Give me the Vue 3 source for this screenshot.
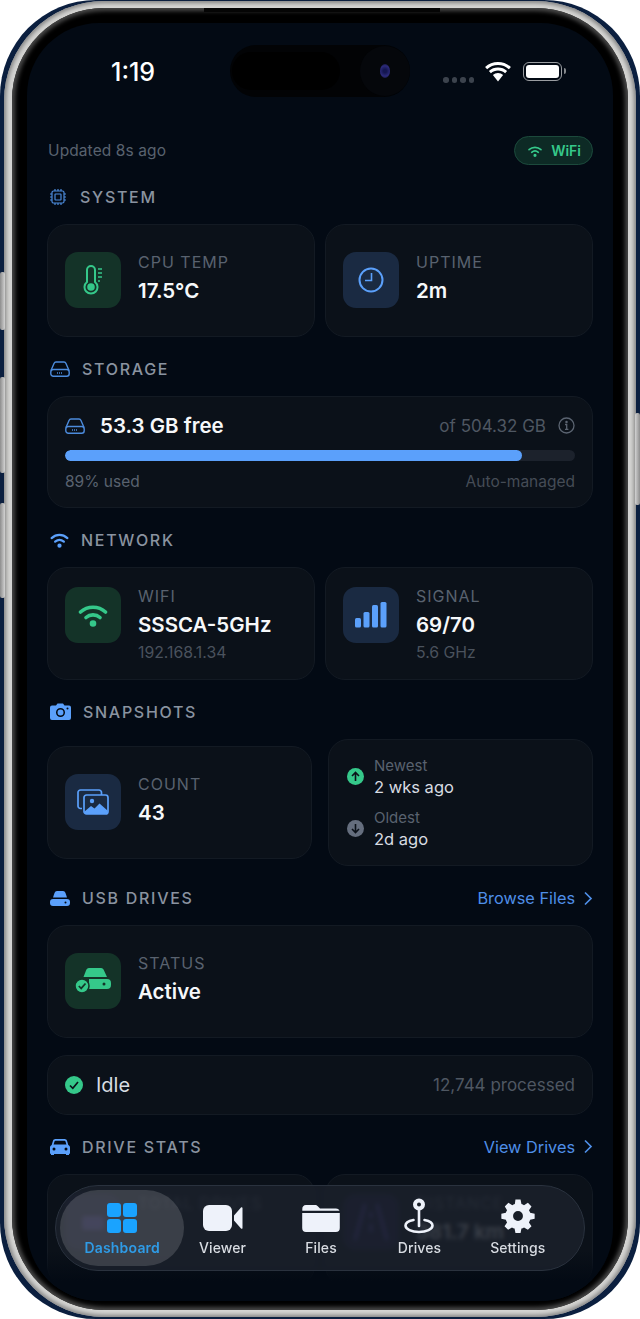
<template>
    <div class="phone">
        <span class="side-btn left b1"></span>
        <span class="side-btn left b2"></span>
        <span class="side-btn left b3"></span>
        <span class="side-btn right b4"></span>
        <div class="ring">
            <div class="bezel">
                <span class="lip"></span>
                <div class="screen">
                    <div class="status-bar">
                        <span class="time">1:19</span>
                        <div class="status-right">
                            <span class="dots"><i></i><i></i><i></i><i></i></span>
                            <svg class="st-wifi" viewBox="0 0 28 20" fill="#fff">
                                <path d="M14 3c4.200 0 8 1.600 10.900 4.200l2-2.300C23.400 1.800 18.900 0 14 0S4.600 1.800 1.100 4.900l2 2.300C6 4.600 9.800 3 14 3z" />
                                <path d="M14 8.500c2.700 0 5.200 1 7.100 2.700l2-2.300C20.600 6.700 17.400 5.500 14 5.500S7.400 6.700 4.900 8.900l2 2.300c1.900-1.700 4.400-2.700 7.100-2.700z" />
                                <path d="M14 11c-1.900 0-3.700.7-5.100 2L14 19.500l5.100-6.500c-1.400-1.300-3.200-2-5.100-2z" />
                            </svg>
                            <span class="battery"><i></i></span>
                        </div>
                    </div>

                    <div class="island">
                        <span class="island-pill"></span>
                        <span class="island-cam"><i></i></span>
                    </div>

                    <div class="top-row">
                        <span class="updated">Updated 8s ago</span>
                        <span class="conn-pill">
                            <svg viewBox="0 0 24 24" width="16" height="16" fill="none" stroke="#35c88a" stroke-width="2.400" stroke-linecap="round">
                                <path d="M3 10c5-4.600 13-4.600 18 0" />
                                <path d="M7 14c2.900-2.600 7.100-2.600 10 0" />
                                <circle cx="12" cy="18.500" r="1.200" fill="#35c88a" />
                            </svg>
                            WiFi
                        </span>
                    </div>

                    <section>
                        <header class="sec-head">
                            <svg class="sec-icon chip" width="16" height="16" viewBox="0 0 16 16" fill="none" stroke="#4c8bdc" stroke-width="1.200">
                                <rect x="2" y="2" width="12" height="12" rx="1.500" />
                                <rect x="5" y="5" width="6" height="6" rx=".5" />
                                <path d="M5 0v2M8 0v2M11 0v2M5 14v2M8 14v2M11 14v2M0 5h2M0 8h2M0 11h2M14 5h2M14 8h2M14 11h2" />
                            </svg>
                            <h2>SYSTEM</h2>
                        </header>
                        <div class="two-col">
                            <div class="card stat">
                                <div class="icon-box green">
                                    <svg width="22" height="30" viewBox="0 0 22 30" fill="none" stroke="#35c88a" stroke-width="2">
                                        <path d="M5 17V5a4 4 0 0 1 8 0v12a6.500 6.500 0 1 1-8 0z" />
                                        <circle cx="9" cy="22" r="2.800" fill="#35c88a" />
                                        <path d="M16 4h4M16 8h4M16 12h4M16 16h2" stroke-width="1.500" />
                                    </svg>
                                </div>
                                <div class="stat-text">
                                    <span class="label">CPU TEMP</span>
                                    <span class="value">17.5°C</span>
                                </div>
                            </div>
                            <div class="card stat">
                                <div class="icon-box blue">
                                    <svg width="28" height="28" viewBox="0 0 28 28" fill="none" stroke="#5ba0fb" stroke-width="2">
                                        <circle cx="14" cy="14" r="11.500" />
                                        <path d="M14.500 7v7.500H8" stroke-width="1.600" />
                                    </svg>
                                </div>
                                <div class="stat-text">
                                    <span class="label">UPTIME</span>
                                    <span class="value">2m</span>
                                </div>
                            </div>
                        </div>
                    </section>

                    <section>
                        <header class="sec-head">
                            <svg class="sec-icon" width="20" height="16" viewBox="0 0 20 16" fill="none" stroke="#4c8bdc" stroke-width="1.400">
                                <path d="M1 9.500 4 2.500C4.400 1.600 5 1 6 1h8c1 0 1.600.6 2 1.500l3 7" />
                                <rect x=".8" y="8.500" width="18.400" height="6.700" rx="2.500" />
                                <path d="M7 12h6" stroke-dasharray="1 1" />
                            </svg>
                            <h2>STORAGE</h2>
                        </header>
                        <div class="card storage">
                            <div class="storage-top">
                                <svg width="20" height="16" viewBox="0 0 20 16" fill="none" stroke="#4c8bdc" stroke-width="1.400">
                                    <path d="M1 9.500 4 2.500C4.400 1.600 5 1 6 1h8c1 0 1.600.6 2 1.500l3 7" />
                                    <rect x=".8" y="8.500" width="18.400" height="6.700" rx="2.500" />
                                    <path d="M7 12h6" stroke-dasharray="1 1" />
                                </svg>
                                <span class="free">53.3 GB free</span>
                                <span class="total">of 504.32 GB</span>
                                <svg width="17" height="17" viewBox="0 0 17 17" fill="none" stroke="#5b6471" stroke-width="1.300">
                                    <circle cx="8.500" cy="8.500" r="7.500" />
                                    <path d="M7 7.500h1.700V12M7 12.300h3.400" />
                                    <circle cx="8.500" cy="5" r=".6" fill="#5b6471" />
                                </svg>
                            </div>
                            <div class="track"><div class="fill" :style="{ width: usedPercent + '%' }"></div></div>
                            <div class="storage-foot">
                                <span>89% used</span>
                                <span class="dim">Auto-managed</span>
                            </div>
                        </div>
                    </section>

                    <section>
                        <header class="sec-head">
                            <svg class="sec-icon" width="19" height="15" viewBox="0 0 24 19" fill="none" stroke="#5ba0fb" stroke-width="2.800" stroke-linecap="round">
                                <path d="M2 6.500c6-5.400 14-5.400 20 0" />
                                <path d="M6.500 11c3.300-2.800 7.700-2.800 11 0" />
                                <circle cx="12" cy="16" r="1.300" fill="#5ba0fb" />
                            </svg>
                            <h2>NETWORK</h2>
                        </header>
                        <div class="two-col">
                            <div class="card stat top">
                                <div class="icon-box green">
                                    <svg width="30" height="23" viewBox="0 0 30 23" fill="none" stroke="#35c88a" stroke-width="3.600" stroke-linecap="round">
                                        <path d="M2.500 8c7-6.400 18-6.400 25 0" />
                                        <path d="M8 13.500c4-3.500 10-3.500 14 0" />
                                        <circle cx="15" cy="19.500" r="1.500" fill="#35c88a" />
                                    </svg>
                                </div>
                                <div class="stat-text">
                                    <span class="label">WIFI</span>
                                    <span class="value">SSSCA-5GHz</span>
                                    <span class="sub">192.168.1.34</span>
                                </div>
                            </div>
                            <div class="card stat top">
                                <div class="icon-box blue">
                                    <svg width="32" height="26" viewBox="0 0 32 26" fill="#5ba0fb">
                                        <rect x="0" y="16" width="6" height="9.500" rx="1.500" />
                                        <rect x="8.500" y="10" width="6" height="15.500" rx="1.500" />
                                        <rect x="17" y="3" width="6" height="22.500" rx="1.500" />
                                        <rect x="25.500" y="0" width="6" height="25.500" rx="1.500" />
                                    </svg>
                                </div>
                                <div class="stat-text">
                                    <span class="label">SIGNAL</span>
                                    <span class="value">69/70</span>
                                    <span class="sub">5.6 GHz</span>
                                </div>
                            </div>
                        </div>
                    </section>

                    <section>
                        <header class="sec-head">
                            <svg class="sec-icon" width="21" height="17" viewBox="0 0 21 17" fill="#5ba0fb">
                                <path fill-rule="evenodd" d="M2 2.500h4L7.500.5h5.500L14.500 2.500H19a2 2 0 0 1 2 2V15a2 2 0 0 1-2 2H2a2 2 0 0 1-2-2V4.500a2 2 0 0 1 2-2zM10.500 5a4.500 4.500 0 1 0 0 9 4.500 4.500 0 0 0 0-9zm0 1.500a3 3 0 1 1 0 6 3 3 0 0 1 0-6zM17.500 4.500a1 1 0 1 0 0 2 1 1 0 0 0 0-2z" />
                            </svg>
                            <h2>SNAPSHOTS</h2>
                        </header>
                        <div class="snap-row">
                            <div class="card stat">
                                <div class="icon-box blue">
                                    <svg width="32" height="26" viewBox="0 0 32 26" fill="none">
                                        <path d="M5 19.500H3.500A2.500 2.500 0 0 1 1 17V3.500A2.500 2.500 0 0 1 3.500 1H22a2.500 2.500 0 0 1 2.500 2.500V6" stroke="#5ba0fb" stroke-width="1.700" />
                                        <rect x="7" y="6" width="24" height="19" rx="2.500" fill="#1a2a42" stroke="#5ba0fb" stroke-width="1.700" />
                                        <circle cx="15" cy="12" r="2.200" fill="#5ba0fb" />
                                        <path d="M7.500 22.500 14 17l3.500 2.500 5-5 8 7V23a2 2 0 0 1-2 2h-19a2 2 0 0 1-2-2z" fill="#5ba0fb" />
                                    </svg>
                                </div>
                                <div class="stat-text">
                                    <span class="label">COUNT</span>
                                    <span class="value">43</span>
                                </div>
                            </div>
                            <div class="card ages">
                                <div class="age">
                                    <span class="age-dot up">
                                        <svg width="11" height="11" viewBox="0 0 11 11" fill="none" stroke="#0b1119" stroke-width="1.600"><path d="M5.500 10V1.500M2 5l3.500-3.500L9 5" /></svg>
                                    </span>
                                    <div class="age-text">
                                        <span>Newest</span>
                                        <b>2 wks ago</b>
                                    </div>
                                </div>
                                <div class="age">
                                    <span class="age-dot down">
                                        <svg width="11" height="11" viewBox="0 0 11 11" fill="none" stroke="#0b1119" stroke-width="1.600"><path d="M5.500 1v8.500M2 6l3.500 3.500L9 6" /></svg>
                                    </span>
                                    <div class="age-text">
                                        <span>Oldest</span>
                                        <b>2d ago</b>
                                    </div>
                                </div>
                            </div>
                        </div>
                    </section>

                    <section>
                        <header class="sec-head">
                            <svg class="sec-icon" width="20" height="15" viewBox="0 0 20 15" fill="#5ba0fb">
                                <path d="M3 6.500 4.500 2C5 .8 5.800 0 7 0h6c1.200 0 2 .8 2.500 2L17 6.500z" />
                                <path fill-rule="evenodd" d="M3 8h14a3 3 0 0 1 3 3v1a3 3 0 0 1-3 3H3a3 3 0 0 1-3-3v-1a3 3 0 0 1 3-3zm12.500 2.500a1 1 0 1 0 0 2 1 1 0 0 0 0-2z" />
                            </svg>
                            <h2>USB DRIVES</h2>
                            <a class="more">Browse Files
                                <svg width="10" height="15" viewBox="0 0 10 15" fill="none" stroke="#4f8fe8" stroke-width="1.700"><path d="m2 1.500 6 6-6 6" /></svg>
                            </a>
                        </header>
                        <div class="card stat">
                            <div class="icon-box green">
                                <svg width="36" height="26" viewBox="0 0 36 26" fill="#35c88a">
                                    <path d="M8.500 9 11 2.500C11.500 1 12.500 0 14 0h12c1.500 0 2.500 1 3 2.500L32 9z" />
                                    <path fill-rule="evenodd" d="M14 11h18a4 4 0 0 1 4 4v2a4 4 0 0 1-4 4H14zm15 3.500a1.500 1.500 0 1 0 0 3 1.500 1.500 0 0 0 0-3z" />
                                    <circle cx="7" cy="18" r="7" stroke="#143328" stroke-width="1.500" />
                                    <path d="m3.800 18 2.400 2.400L10.500 15.500" fill="none" stroke="#143328" stroke-width="1.700" />
                                </svg>
                            </div>
                            <div class="stat-text">
                                <span class="label">STATUS</span>
                                <span class="value">Active</span>
                            </div>
                        </div>
                        <div class="card idle">
                            <span class="idle-dot">
                                <svg width="12" height="12" viewBox="0 0 12 12" fill="none" stroke="#0b1119" stroke-width="1.700"><path d="m2 6.500 2.800 2.800L10 3" /></svg>
                            </span>
                            <span class="idle-name">Idle</span>
                            <span class="total">12,744 processed</span>
                        </div>
                    </section>

                    <section>
                        <header class="sec-head">
                            <svg class="sec-icon" width="20" height="16" viewBox="0 0 20 16" fill="#5ba0fb">
                                <path fill-rule="evenodd" d="M5.500 0h9c1.300 0 2.200.7 2.600 1.900L18.300 6c1 .5 1.700 1.500 1.700 2.700V14a1 1 0 0 1-1 1v.5a.5.5 0 0 1-.5.5h-2a.5.5 0 0 1-.5-.5V15H4v.5a.5.5 0 0 1-.5.5h-2a.5.5 0 0 1-.5-.5V15a1 1 0 0 1-1-1V8.700C0 7.500.7 6.500 1.700 6l1.200-4.100C3.300.7 4.200 0 5.500 0zm0 1.700c-.5 0-.8.300-1 .7L3.600 5.500h12.800l-.9-3.100c-.2-.4-.5-.7-1-.7zM4 8.500a1.500 1.500 0 1 0 0 3 1.500 1.500 0 0 0 0-3zm12 0a1.500 1.500 0 1 0 0 3 1.500 1.500 0 0 0 0-3z" />
                            </svg>
                            <h2>DRIVE STATS</h2>
                            <a class="more">View Drives
                                <svg width="10" height="15" viewBox="0 0 10 15" fill="none" stroke="#4f8fe8" stroke-width="1.700"><path d="m2 1.500 6 6-6 6" /></svg>
                            </a>
                        </header>
                        <div class="two-col">
                            <div class="card stat top">
                                <div class="icon-box purple">
                                    <svg width="30" height="28" viewBox="0 0 30 28" fill="#5a45b8"><rect x="4" y="8" width="22" height="14" rx="3" /></svg>
                                </div>
                                <div class="stat-text">
                                    <span class="label">TOTAL DRIVES</span>
                                </div>
                            </div>
                            <div class="card stat top">
                                <div class="icon-box purple">
                                    <svg width="36" height="40" viewBox="0 0 36 40" fill="none" stroke="#5a45b8" stroke-width="3"><path d="M12 2 2 38M24 2l10 36M18 10v6M18 22v8" /></svg>
                                </div>
                                <div class="stat-text">
                                    <span class="label">DISTANCE</span>
                                    <span class="value">381.7 km</span>
                                </div>
                            </div>
                        </div>
                    </section>

                    <div class="tab-fade"></div>

                    <!-- floating tab bar, sits over the scrolled content -->
                    <nav class="tab-bar">
                        <span class="tab-pill"></span>
                        <a class="tab active">
                            <svg width="32" height="32" viewBox="0 0 32 32" fill="#1aa3ff">
                                <rect x="1" y="1" width="14" height="14" rx="3" />
                                <rect x="17" y="1" width="14" height="14" rx="3" />
                                <rect x="1" y="17" width="14" height="14" rx="3" />
                                <rect x="17" y="17" width="14" height="14" rx="3" />
                            </svg>
                            <span>Dashboard</span>
                        </a>
                        <a class="tab">
                            <svg width="40" height="32" viewBox="0 0 40 32" fill="#eef2fa">
                                <rect x="0" y="3" width="29" height="26" rx="6" />
                                <path d="M31 13.500 38 5.500c.6-.7 1.500-.3 1.500.6v19.800c0 .9-.9 1.300-1.500.6l-7-8z" />
                            </svg>
                            <span>Viewer</span>
                        </a>
                        <a class="tab">
                            <svg width="38" height="32" viewBox="0 0 38 32" fill="#eef2fa">
                                <path d="M4 3h9c1.200 0 2 .4 2.800 1.200L18 6.500h16a4 4 0 0 1 3.600 2.300H.3V7a4 4 0 0 1 3.700-4z" />
                                <path d="M.2 11h37.600v15a4 4 0 0 1-4 4H4a4 4 0 0 1-3.800-4z" />
                            </svg>
                            <span>Files</span>
                        </a>
                        <a class="tab">
                            <svg width="32" height="36" viewBox="0 0 32 36" fill="none" stroke="#eef2fa">
                                <path d="M10.500 22C5.500 23 2.500 25 2.500 27.500c0 3.600 6 6.500 13.500 6.500s13.500-2.900 13.500-6.500c0-2.500-3-4.500-8-5.500" stroke-width="2.600" stroke-linecap="round" />
                                <path d="M16 12v16" stroke-width="2.600" stroke-linecap="round" />
                                <circle cx="16" cy="6.500" r="4" stroke-width="4" fill="#1a2029" />
                            </svg>
                            <span>Drives</span>
                        </a>
                        <a class="tab">
                            <svg width="36" height="36" viewBox="0 0 24 24" fill="#eef2fa">
                                <path fill-rule="evenodd" d="M10.300 1h3.400l.6 3c.6.2 1.200.5 1.700.8l2.600-1.600 2.400 2.400-1.700 2.500c.4.600.6 1.200.8 1.800l3 .6v3.400l-3 .6c-.2.600-.4 1.200-.8 1.800l1.700 2.500-2.400 2.400-2.600-1.600c-.5.300-1.100.6-1.700.8l-.6 3h-3.400l-.6-3c-.6-.2-1.200-.5-1.700-.8l-2.600 1.600-2.400-2.400 1.700-2.500c-.4-.6-.6-1.200-.8-1.800l-3-.6v-3.400l3-.6c.2-.6.4-1.200.8-1.800L3.200 5.600l2.400-2.400 2.600 1.600c.5-.3 1.100-.6 1.700-.8zM12 8.700a3.300 3.300 0 1 0 0 6.600 3.300 3.300 0 0 0 0-6.600z" />
                            </svg>
                            <span>Settings</span>
                        </a>
                    </nav>
                </div>
            </div>
        </div>
    </div>
</template>

<script setup>
const usedPercent = 89.7;
</script>

<style>
body {
    background: #fff;
}
</style>

<style scoped>
* {
    box-sizing: border-box;
}

.phone {
    position: relative;
    width: 640px;
    height: 1319px;
    padding: 1px 4px 2px;
    border-radius: 96px;
    background: #0b1f3f;
    font-family: Inter, "Liberation Sans", sans-serif;
    overflow: hidden;
}

.side-btn {
    position: absolute;
    width: 5px;
    background: linear-gradient(90deg, #8d8d8d, #d2d2d2);
    border-radius: 2px;
}
.side-btn.left { left: 0; }
.side-btn.right { right: 0; background: linear-gradient(270deg, #8d8d8d, #d2d2d2); }
.b1 { top: 272px; height: 58px; }
.b2 { top: 377px; height: 96px; }
.b3 { top: 503px; height: 95px; }
.b4 { top: 413px; height: 92px; }

.ring {
    height: 100%;
    padding: 7px 8px;
    border-radius: 100px;
    background: #d4d4d2;
    box-shadow: inset 0 0 4px 2px #808080;
}

.bezel {
    position: relative;
    height: 100%;
    padding: 15px 15px 9px;
    border-radius: 92px;
    background: #000;
    box-shadow: inset 0 0 4px 3px #4a4a4a;
}

.lip {
    position: absolute;
    top: 0;
    left: 192px;
    width: 236px;
    height: 4px;
    background: #050505;
}

.screen {
    position: relative;
    height: 100%;
    padding: 0 20px;
    border-radius: 72px;
    background: #030a14;
    overflow: hidden;
}

.status-bar {
    display: flex;
    justify-content: space-between;
    height: 113px;
    padding: 37px 31px 0 64px;
}

.time {
    font-size: 25px;
    font-weight: 500;
    line-height: 24px;
    color: #fff;
}

.status-right {
    display: flex;
    align-items: flex-start;
    margin-top: 2px;
}

.dots {
    display: flex;
    gap: 3px;
    margin: 15px 10px 0 0;
}
.dots i {
    width: 5.500px;
    height: 5.500px;
    border-radius: 50%;
    background: #3c434d;
}

.st-wifi {
    width: 28px;
    height: 20px;
    margin-right: 11px;
}

.battery {
    position: relative;
    width: 39px;
    height: 19px;
    padding: 2px;
    border: 1.500px solid #9a9da1;
    border-radius: 6px;
}
.battery i {
    display: block;
    height: 100%;
    background: #fff;
    border-radius: 3px;
}
.battery::after {
    content: "";
    position: absolute;
    right: -5px;
    top: 5px;
    width: 2.500px;
    height: 6px;
    border-radius: 0 2px 2px 0;
    background: #85888c;
}

.island {
    position: absolute;
    top: 22px;
    left: 203px;
    width: 180px;
    height: 52px;
    display: flex;
    align-items: center;
    justify-content: space-between;
    padding-left: 2px;
    border-radius: 26px;
    background: #020305;
}
.island-pill {
    width: 108px;
    height: 38px;
    border-radius: 19px;
    background: #000;
}
.island-cam {
    display: flex;
    align-items: center;
    justify-content: center;
    width: 50px;
    height: 50px;
    border-radius: 50%;
    background: #05070b;
}
.island-cam i {
    width: 10px;
    height: 14px;
    border-radius: 50%;
    background: radial-gradient(circle, #141650 20%, #2c2a7a 60%, #0a0c1c 100%);
}

.top-row {
    display: flex;
    align-items: center;
    justify-content: space-between;
    height: 29px;
}

.updated {
    margin-left: 1px;
    font-size: 15.500px;
    letter-spacing: 0.100px;
    color: #59626f;
}

.conn-pill {
    display: flex;
    align-items: center;
    gap: 8px;
    height: 29px;
    padding: 0 11px 0 12px;
    border: 1px solid #1c4a3c;
    border-radius: 15px;
    background: #0d2a25;
    font-size: 14px;
    font-weight: 600;
    color: #35c88a;
}

section {
    margin-top: 22px;
}

.sec-head {
    display: flex;
    align-items: center;
    gap: 12px;
    height: 20px;
    margin-bottom: 17px;
    margin-left: 3px;
}

.sec-head .chip {
    margin-right: 2px;
}

.sec-head h2 {
    margin: 0;
    font-size: 16px;
    font-weight: 500;
    letter-spacing: 1.700px;
    color: #8a93a0;
}

.more {
    display: flex;
    align-items: center;
    gap: 8px;
    margin-left: auto;
    font-size: 16.300px;
    color: #4f8fe8;
}

.two-col {
    display: grid;
    grid-template-columns: 268px 268px;
    gap: 10px;
}

.card {
    border: 1px solid #131a23;
    border-radius: 20px;
    background: #0b1119;
}

.stat {
    display: flex;
    align-items: center;
    gap: 17px;
    height: 112.500px;
    padding: 0 17px;
}
.stat.top {
    align-items: flex-start;
    padding-top: 19px;
}

.icon-box {
    flex: none;
    display: flex;
    align-items: center;
    justify-content: center;
    width: 56px;
    height: 56px;
    border-radius: 13px;
}
.icon-box.green { background: #143328; }
.icon-box.blue { background: #1a2a42; }
.icon-box.purple { background: #1c1a40; }

.stat-text {
    display: flex;
    flex-direction: column;
    padding-bottom: 3px;
}
.stat.top .stat-text {
    margin-top: -1px;
}

.label {
    font-size: 16px;
    line-height: 20px;
    letter-spacing: 1px;
    color: #59626f;
}

.value {
    margin-top: 5px;
    font-size: 20.500px;
    font-weight: 600;
    line-height: 28px;
    color: #f6f8fa;
}

.sub {
    margin-top: 4px;
    font-size: 15.800px;
    line-height: 20px;
    color: #4a525d;
}

.storage {
    height: 112.500px;
    padding: 16px 17px 0;
}

.storage-top {
    display: flex;
    align-items: center;
    height: 26px;
}
.free {
    margin-left: 15px;
    font-size: 20.500px;
    font-weight: 600;
    color: #f6f8fa;
}
.total {
    margin-left: auto;
    font-size: 17px;
    color: #4f5762;
}
.storage-top .total {
    margin-right: 12px;
}

.track {
    height: 11px;
    margin-top: 11px;
    border-radius: 6px;
    background: #1c222c;
    overflow: hidden;
}
.fill {
    height: 100%;
    border-radius: 6px;
    background: #5ba0fb;
}

.storage-foot {
    display: flex;
    justify-content: space-between;
    margin-top: 11px;
    font-size: 15.500px;
    color: #59626f;
}
.dim {
    color: #454c56;
}

.snap-row {
    display: grid;
    grid-template-columns: 265px 265px;
    gap: 16px;
    align-items: center;
}
.snap-row .stat {
    height: 113.500px;
}

.ages {
    display: flex;
    flex-direction: column;
    gap: 10px;
    height: 127.500px;
    padding: 16px 18px 0;
}
.age {
    display: flex;
    align-items: center;
    gap: 10px;
}
.age-dot {
    display: flex;
    align-items: center;
    justify-content: center;
    width: 17px;
    height: 17px;
    border-radius: 50%;
}
.age-dot.up { background: #35c88a; }
.age-dot.down { background: #656e7e; }
.age-text {
    display: flex;
    flex-direction: column;
}
.age-text span {
    font-size: 15px;
    line-height: 20px;
    color: #59626f;
}
.age-text b {
    font-size: 16.500px;
    font-weight: 400;
    line-height: 22px;
    color: #d8dce2;
}

.idle {
    display: flex;
    align-items: center;
    height: 60px;
    margin-top: 17px;
    padding: 0 17px;
}
.idle-dot {
    display: flex;
    align-items: center;
    justify-content: center;
    width: 18px;
    height: 18px;
    border-radius: 50%;
    background: #35c88a;
}
.idle-name {
    margin-left: 13px;
    font-size: 20px;
    color: #d8dce2;
}

.tab-fade {
    position: absolute;
    left: 0;
    right: 0;
    bottom: 0;
    height: 50px;
    background: linear-gradient(#030a1400, #030a14 60%);
}

.tab-bar {
    position: absolute;
    left: 28px;
    top: 1162px;
    width: 530px;
    height: 86px;
    display: flex;
    padding: 0 17px;
    border: 1px solid #2a323e;
    border-radius: 43px;
    background: rgba(27, 33, 43, 0.86);
    backdrop-filter: blur(2px);
}

.tab-pill {
    position: absolute;
    left: 4px;
    top: 4px;
    width: 124px;
    height: 76px;
    border-radius: 38px;
    background: rgba(255, 255, 255, 0.15);
}

.tab {
    position: relative;
    flex: 1;
    display: flex;
    flex-direction: column;
    align-items: center;
    justify-content: flex-end;
    gap: 5px;
    height: 70px;
    font-size: 14px;
    font-weight: 500;
    letter-spacing: 0.100px;
    color: #d8dce2;
}
.tab.active {
    margin-right: 2px;
    color: #2f9be6;
    font-weight: 600;
    letter-spacing: 0.200px;
}
</style>
